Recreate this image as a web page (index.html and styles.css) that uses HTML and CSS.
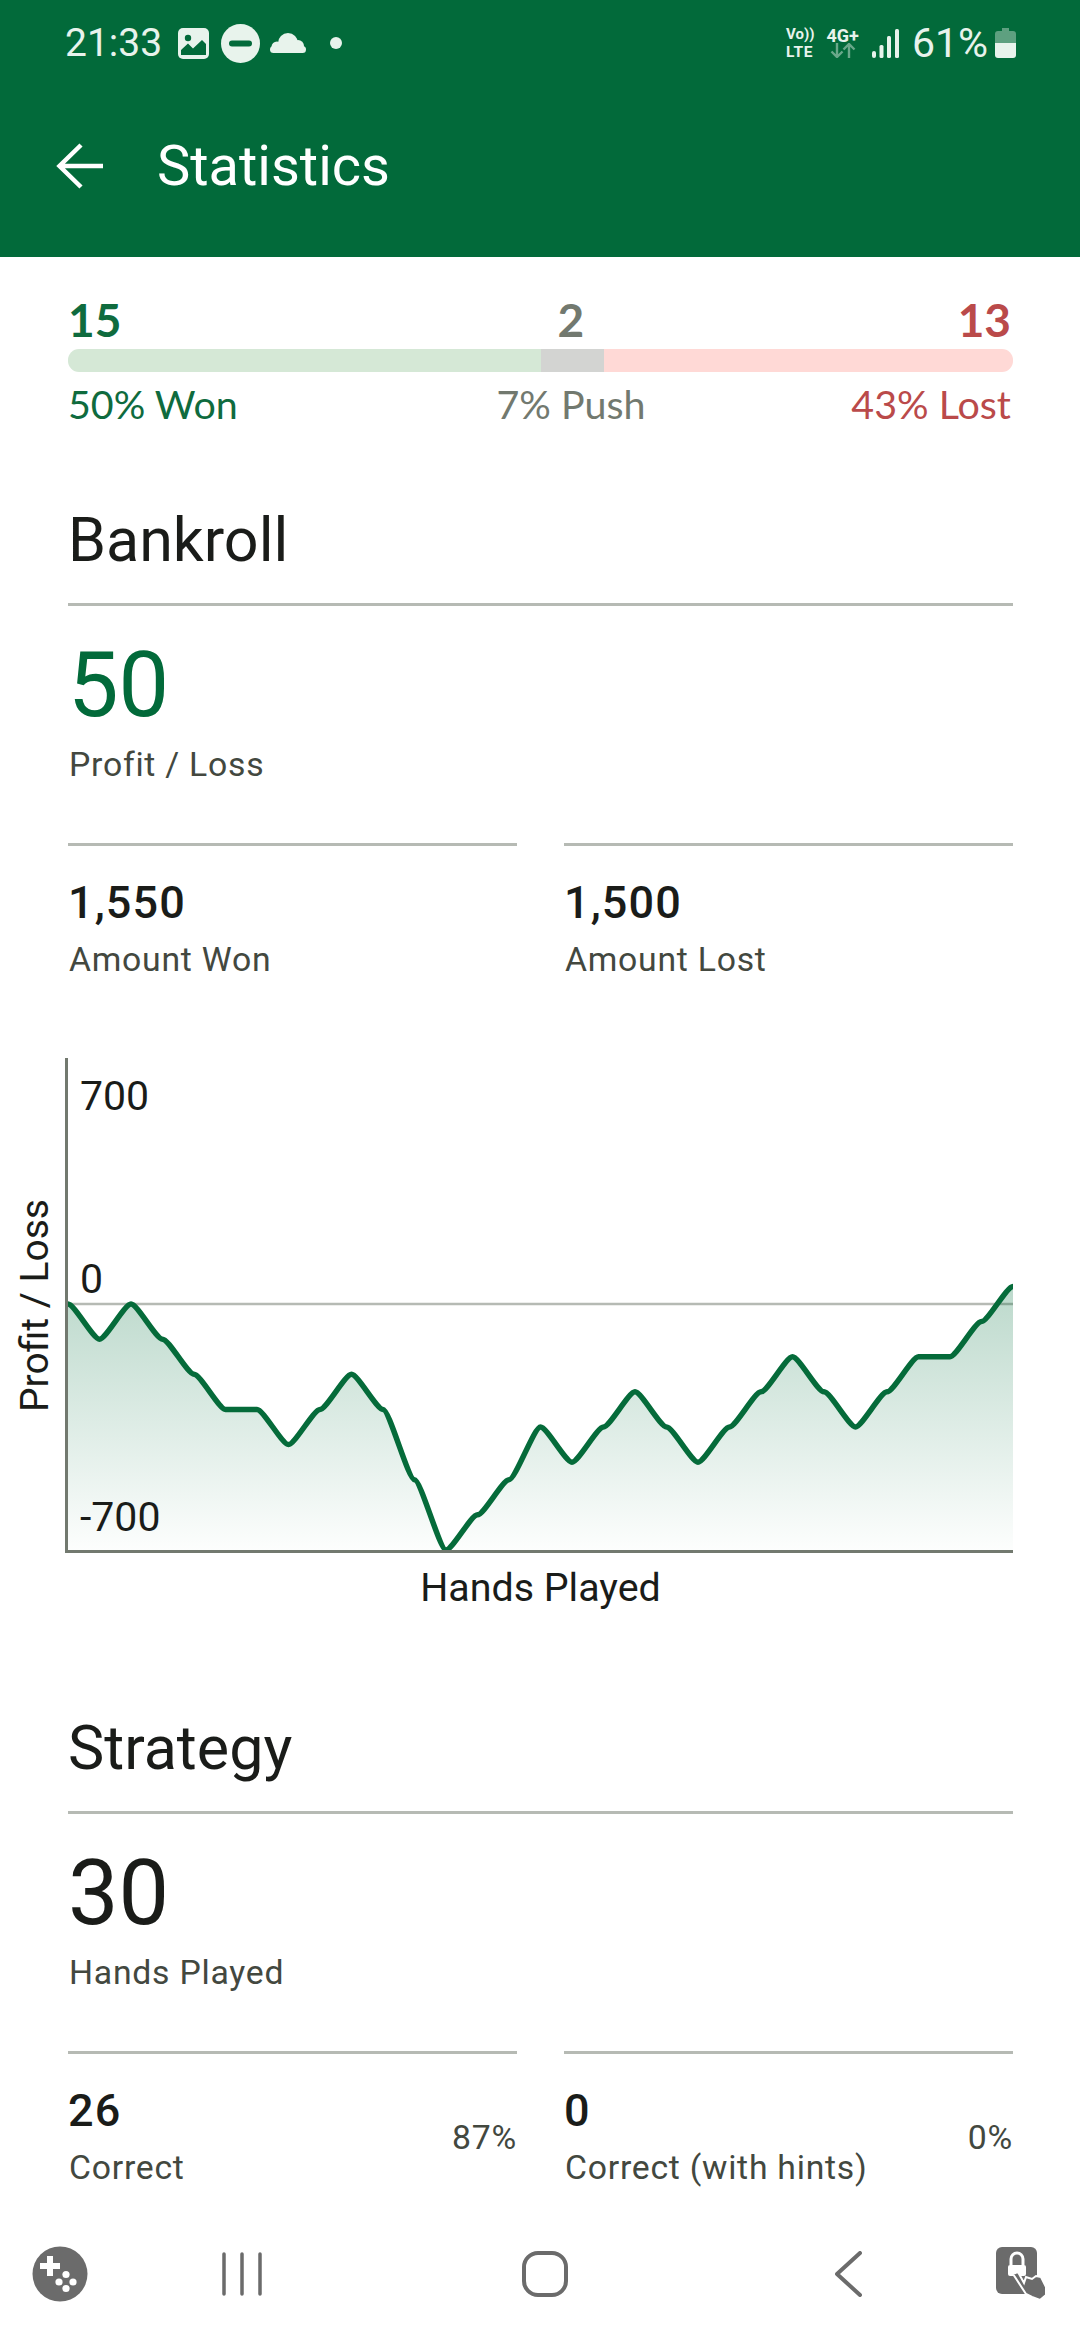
FILE: index.html
```html
<!DOCTYPE html>
<html lang="en">
<head>
  <meta charset="UTF-8" />
  <title>Statistics</title>
  <link rel="stylesheet" href="styles.css">
</head>
<body>
  <header class="top">
    <div class="status">
      <div class="status-left">
        <span class="clock">21:33</span>
        <svg class="ic-image" width="31" height="31" viewBox="0 0 31 31"><rect width="31" height="31" rx="5" fill="#e8f3ec"/><circle cx="10" cy="10" r="3.2" fill="#026a3a"/><path d="M3 27V22L10 15.5L15 20.5L24 12L28 16V27Z" fill="#026a3a"/></svg>
        <svg class="ic-dnd" width="39" height="39" viewBox="0 0 39 39"><circle cx="19.5" cy="19.5" r="19.5" fill="#e8f3ec"/><rect x="8" y="16.5" width="23" height="6" rx="3" fill="#026a3a"/></svg>
        <svg class="ic-cloud" width="36" height="20" viewBox="0 0 36 20"><rect y="13" width="36" height="7" rx="3.5" fill="#e8f3ec"/><circle cx="18" cy="10" r="10" fill="#e8f3ec"/><circle cx="7" cy="14" r="5.5" fill="#e8f3ec"/><circle cx="28" cy="13" r="6" fill="#e8f3ec"/></svg>
        <span class="dot"></span>
      </div>
      <div class="status-right">
        <div class="volte"><span>Vo))</span><span class="lte">LTE</span></div>
        <div class="net">
          <span>4G+</span>
          <svg width="26" height="15" viewBox="0 0 26 15" fill="none" stroke="#e8f3ec" stroke-width="2.4" opacity=".45"><path d="M7 0V14M1.5 8.5L7 14L12.500 8.500"/><path d="M19 15V1M13.500 6.500L19 1L24.500 6.500"/></svg>
        </div>
        <svg class="signal" width="27" height="29" viewBox="0 0 27 29" fill="#e8f3ec"><rect y="22" width="4" height="7" rx="2"/><rect x="7.500" y="16" width="4" height="13" rx="1.500"/><rect x="15" y="7" width="4" height="22" rx="1.500"/><rect x="23" width="4" height="29" rx="1.500"/></svg>
        <span class="battery-pct">61%</span>
        <svg class="battery" width="21" height="30" viewBox="0 0 21 30"><path d="M7 0H14V3H18Q21 3 21 6V15H0V6Q0 3 3 3H7Z" fill="#e8f3ec" opacity=".4"/><path d="M0 15H21V27Q21 30 18 30H3Q0 30 0 27Z" fill="#e8f3ec"/></svg>
      </div>
    </div>
    <div class="appbar">
      <svg width="48" height="48" viewBox="0 0 48 48" fill="none" stroke="#fff" stroke-width="4.500"><path d="M47 24H4M25 3L3.500 24L25 45"/></svg>
      <h1>Statistics</h1>
    </div>
  </header>

  <main class="content">
    <section class="results">
      <div class="seg seg-won">
        <div class="count">15</div>
      </div>
      <div class="seg seg-push">
        <div class="count">2</div>
      </div>
      <div class="seg seg-lost">
        <div class="count">13</div>
      </div>
    </section>
    <div class="bar">
      <div class="bar-won"></div>
      <div class="bar-push"></div>
      <div class="bar-lost"></div>
    </div>
    <section class="results">
      <div class="seg seg-won"><div class="pct">50% Won</div></div>
      <div class="seg seg-push"><div class="pct">7% Push</div></div>
      <div class="seg seg-lost"><div class="pct">43% Lost</div></div>
    </section>

    <h2 class="section-title first">Bankroll</h2>
    <div class="big-stat">
      <div class="big-value green">50</div>
      <div class="label">Profit / Loss</div>
    </div>
    <div class="stat-row">
      <div class="stat">
        <div>
          <div class="value">1,550</div>
          <div class="label">Amount Won</div>
        </div>
      </div>
      <div class="stat">
        <div>
          <div class="value">1,500</div>
          <div class="label">Amount Lost</div>
        </div>
      </div>
    </div>

    <div class="chart">
      <div class="y-title"><span>Profit / Loss</span></div>
      <div class="plot">
        <svg class="plot-svg" viewBox="0 -7 30 14" preserveAspectRatio="none">
          <defs>
            <linearGradient id="area" gradientUnits="userSpaceOnUse" x1="0" y1="-.5" x2="0" y2="7">
              <stop offset="0" stop-color="#067240" stop-opacity=".27"/>
              <stop offset="1" stop-color="#067240" stop-opacity=".01"/>
            </linearGradient>
          </defs>
          <line class="zero" x1="0" y1="0" x2="30" y2="0"/>
          <path fill="url(#area)" d="M0 0C.2 0 .8 1 1 1S1.800 0 2 0S2.800 1 3 1S3.800 2 4 2S4.800 3 5 3S5.800 3 6 3S6.800 4 7 4S7.800 3 8 3S8.800 2 9 2S9.800 3 10 3S10.800 5 11 5S11.800 7 12 7S12.800 6 13 6S13.800 5 14 5S14.800 3.500 15 3.500S15.800 4.500 16 4.500S16.800 3.500 17 3.500S17.800 2.500 18 2.500S18.800 3.500 19 3.500S19.800 4.500 20 4.500S20.800 3.500 21 3.500S21.800 2.500 22 2.500S22.800 1.500 23 1.500S23.800 2.500 24 2.500S24.800 3.500 25 3.500S25.800 2.500 26 2.500S26.800 1.500 27 1.500S27.800 1.500 28 1.500S28.800 .5 29 .5S29.800 -.5 30 -.5L30 7L0 7Z"/>
          <path class="line" d="M0 0C.2 0 .8 1 1 1S1.800 0 2 0S2.800 1 3 1S3.800 2 4 2S4.800 3 5 3S5.800 3 6 3S6.800 4 7 4S7.800 3 8 3S8.800 2 9 2S9.800 3 10 3S10.800 5 11 5S11.800 7 12 7S12.800 6 13 6S13.800 5 14 5S14.800 3.500 15 3.500S15.800 4.500 16 4.500S16.800 3.500 17 3.500S17.800 2.500 18 2.500S18.800 3.500 19 3.500S19.800 4.500 20 4.500S20.800 3.500 21 3.500S21.800 2.500 22 2.500S22.800 1.500 23 1.500S23.800 2.500 24 2.500S24.800 3.500 25 3.500S25.800 2.500 26 2.500S26.800 1.500 27 1.500S27.800 1.500 28 1.500S28.800 .5 29 .5S29.800 -.5 30 -.5"/>
        </svg>
        <span class="tick tick-top">700</span>
        <span class="tick tick-zero">0</span>
        <span class="tick tick-bottom">-700</span>
      </div>
    </div>
    <div class="x-title">Hands Played</div>

    <h2 class="section-title">Strategy</h2>
    <div class="big-stat">
      <div class="big-value">30</div>
      <div class="label">Hands Played</div>
    </div>
    <div class="stat-row">
      <div class="stat">
        <div>
          <div class="value">26</div>
          <div class="label">Correct</div>
        </div>
        <div class="label">87%</div>
      </div>
      <div class="stat">
        <div>
          <div class="value">0</div>
          <div class="label">Correct (with hints)</div>
        </div>
        <div class="label">0%</div>
      </div>
    </div>
  </main>

  <nav class="navbar">
    <svg width="56" height="56" viewBox="0 0 56 56"><circle cx="28" cy="28" r="27.500" fill="#6b6b6b"/><path d="M15 10h6v7h7v6h-7v7h-6v-7H8v-6h7z" fill="#fff"/><circle cx="34" cy="28.500" r="3.600" fill="#fff"/><circle cx="27" cy="36" r="3.600" fill="#fff"/><circle cx="41" cy="36" r="3.600" fill="#fff"/><circle cx="34" cy="42.500" r="3.600" fill="#fff"/></svg>
    <svg width="40" height="44" viewBox="0 0 40 44" fill="none" stroke="#6b6b6b" stroke-width="3.500" stroke-linecap="round"><path d="M2 2V42M20 2V42M38 2V42"/></svg>
    <svg width="46" height="46" viewBox="0 0 46 46" fill="none" stroke="#6b6b6b" stroke-width="4"><rect x="2" y="2" width="42" height="42" rx="14"/></svg>
    <svg width="27" height="46" viewBox="0 0 27 46" fill="none" stroke="#6b6b6b" stroke-width="4" stroke-linecap="round" stroke-linejoin="round"><path d="M25 2L2 23L25 44"/></svg>
    <svg width="52" height="54" viewBox="0 0 52 54"><rect width="41" height="47" rx="6" fill="#6b6b6b"/><rect x="12" y="18" width="18" height="11" rx="2" fill="#fff"/><path d="M15 18V12a6 6 0 0 1 12 0V18" fill="none" stroke="#fff" stroke-width="3"/><path d="M17 27L22 25L28 36L30 30L36 32L40 29L45 30L50 40L50 48L44 53L36 50L30 47Z" fill="#6b6b6b" stroke="#fff" stroke-width="2"/></svg>
  </nav>
</body>
</html>
```

FILE: styles.css
```css
* {
  box-sizing: border-box;
}

body {
  margin: 0;
  width: 1080px;
  height: 2340px;
  overflow: hidden;
  display: flex;
  flex-direction: column;
  background: #fff;
  font-family: Roboto, sans-serif;
  color: #1a1c19;
}

.top {
  height: 257px;
  flex: none;
  background: #026a3a;
}

.status {
  height: 86px;
  padding: 0 64px 0 65px;
  display: flex;
  align-items: center;
  justify-content: space-between;
  color: #e8f3ec;
}

.status-left,
.status-right {
  display: flex;
  align-items: center;
}

.clock {
  font-size: 39px;
  margin-right: 16px;
}

.ic-dnd {
  margin-left: 12px;
}

.ic-cloud {
  margin-left: 10px;
}

.dot {
  width: 12px;
  height: 12px;
  margin-left: 24px;
  border-radius: 50%;
  background: #e8f3ec;
}

.volte {
  display: flex;
  flex-direction: column;
  font-size: 15px;
  font-weight: 700;
  line-height: 18px;
}

.lte {
  font-size: 15.500px;
  letter-spacing: .8px;
}

.net {
  display: flex;
  flex-direction: column;
  align-items: center;
  margin-left: 12px;
  font-size: 18px;
  font-weight: 700;
  line-height: 15px;
}

.signal {
  margin-left: 13px;
}

.battery-pct {
  font-size: 41px;
  margin-left: 13px;
}

.battery {
  margin-left: 7px;
}

.appbar {
  height: 171px;
  padding: 0 0 12px 56px;
  display: flex;
  align-items: center;
  gap: 53px;
}

.appbar h1 {
  margin: 0;
  font-size: 56px;
  font-weight: 400;
  color: #fff;
}

.content {
  flex: 1;
  min-height: 0;
  overflow: hidden;
  padding: 41px 67px 0 68px;
}

.results {
  display: flex;
  padding-right: 2px;
  font-family: Lato, sans-serif;
}

.seg-won {
  width: 50%;
  color: #0f6b3e;
}

.seg-push {
  width: 6.67%;
  display: flex;
  justify-content: center;
  white-space: nowrap;
  color: #72796f;
}

.seg-lost {
  flex: 1;
  text-align: right;
  color: #ba4a4a;
}

.count {
  font-size: 46px;
  line-height: 44px;
  font-weight: 700;
}

.pct {
  font-size: 39.400px;
  line-height: 44px;
}

.bar {
  height: 23px;
  margin: 7px 0 10px;
  display: flex;
  border-radius: 11px;
  overflow: hidden;
}

.bar-won {
  width: 50%;
  background: #d5e8d6;
}

.bar-push {
  width: 6.67%;
  background: #d3d4d2;
}

.bar-lost {
  flex: 1;
  background: #ffd9d6;
}

.section-title {
  margin: 95px 0 0;
  padding: 0 0 23px 0;
  font-size: 61px;
  line-height: 80px;
  font-weight: 400;
  border-bottom: 3px solid #b6bab4;
}

.section-title.first {
  margin-top: 74px;
}

.big-stat {
  padding-top: 30px;
}

.big-value {
  font-size: 90px;
  line-height: 100px;
}

.big-value.green {
  color: #026a3a;
}

.label {
  margin-top: 7px;
  padding-left: 1px;
  font-size: 33.750px;
  line-height: 44px;
  letter-spacing: .75px;
  color: #43483f;
}

.stat-row {
  display: flex;
  gap: 47px;
  margin-top: 56px;
}

.stat {
  flex: 1;
  padding-top: 27px;
  display: flex;
  align-items: center;
  justify-content: space-between;
  border-top: 3px solid #b6bab4;
}

.value {
  font-size: 45px;
  line-height: 60px;
  font-weight: 500;
  letter-spacing: 1.100px;
}

.stat .label {
  margin-top: 5px;
}

.chart {
  display: flex;
  height: 495px;
  margin: 76px 0 0 -68px;
}

.y-title {
  width: 65px;
  flex: none;
  padding-left: 4px;
  display: flex;
  align-items: center;
  justify-content: center;
}

.y-title span {
  writing-mode: vertical-rl;
  transform: rotate(180deg);
  font-size: 39px;
  line-height: 44px;
}

.plot {
  position: relative;
  flex: 1;
  border-left: 3px solid #72796f;
  border-bottom: 3px solid #72796f;
}

.plot-svg {
  display: block;
  width: 100%;
  height: 100%;
}

.zero {
  stroke: #b6bab4;
  stroke-width: 2.500px;
  vector-effect: non-scaling-stroke;
}

.line {
  fill: none;
  stroke: #056b3a;
  stroke-width: 5.500px;
  stroke-linejoin: round;
  vector-effect: non-scaling-stroke;
}

.tick {
  position: absolute;
  left: 12px;
  font-size: 41px;
  line-height: 40px;
}

.tick-top {
  top: 18px;
}

.tick-zero {
  top: 201px;
}

.tick-bottom {
  top: 439px;
}

.x-title {
  margin-top: 10px;
  text-align: center;
  font-size: 39.400px;
  line-height: 50px;
}

.navbar {
  height: 125px;
  flex: none;
  padding-bottom: 8px;
  background: #fff;
  display: grid;
  grid-template-columns: 119px 246px 359px 248px 100px;
  justify-items: center;
  align-items: center;
}
```
